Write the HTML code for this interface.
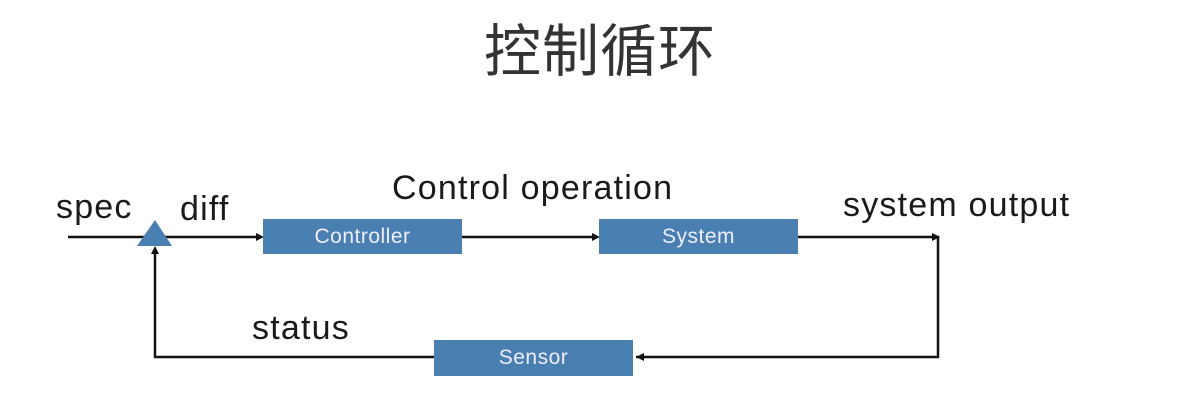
<!DOCTYPE html>
<html><head><meta charset="utf-8"><style>
body{margin:0;width:1190px;height:414px;background:#fff;overflow:hidden;position:relative;font-family:"Liberation Sans",sans-serif}
.t{position:absolute;color:#1a1a1a;font-size:34px;letter-spacing:1.2px;line-height:1;white-space:nowrap}
.box{position:absolute;background:#4a7fb2;color:#eef;font-size:21px;letter-spacing:0.5px;display:flex;align-items:center;justify-content:center;height:35px;width:199px}
</style></head><body>
<div class="t" style="left:5px;width:1190px;text-align:center;top:24px;font-size:57px;letter-spacing:1px;color:#333;font-family:'Liberation Sans','Noto Sans CJK SC',sans-serif">控制循环</div>
<svg width="1190" height="414" style="position:absolute;left:0;top:0">
<g stroke="#111" stroke-width="2.5" fill="none">
<path d="M68 237H260"/><path d="M462 237H596"/><path d="M797 237H938V357H636"/><path d="M434 357H155V250"/>
</g>
<g fill="#111">
<path d="M264 237l-8-4v8z"/><path d="M600 237l-8-4v8z"/><path d="M940 237l-8-4v8z"/><path d="M636 357l8-4v8z"/><path d="M155 246l-4 8h8z"/>
</g>
<path d="M155 220L172 246H137z" fill="#4a7fb2"/>
</svg>
<div class="box" style="left:263px;top:219px">Controller</div>
<div class="box" style="left:599px;top:219px">System</div>
<div class="box" style="left:434px;top:340px;height:36px">Sensor</div>
<div class="t" style="left:56px;top:190px">spec</div>
<div class="t" style="left:180px;top:192px">diff</div>
<div class="t" style="left:392px;top:171px">Control operation</div>
<div class="t" style="left:843px;top:188px">system output</div>
<div class="t" style="left:252px;top:311px">status</div>
</body></html>
